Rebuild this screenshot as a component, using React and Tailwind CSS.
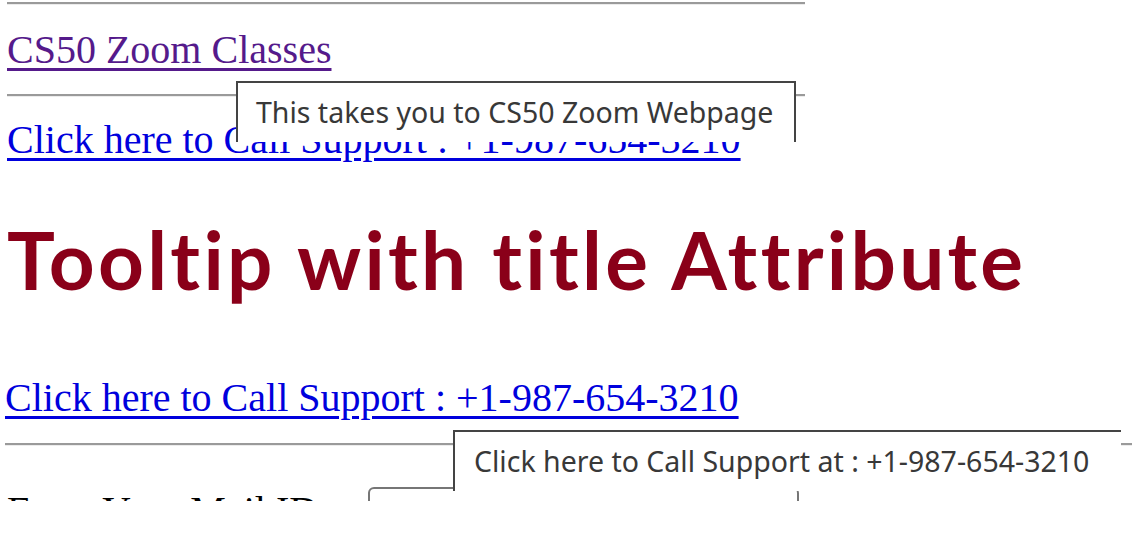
import React from 'react'

const serif = "font-['Liberation_Serif','Times_New_Roman',serif]"
const tipFont = "font-['Noto_Sans','Open_Sans',sans-serif]"

const Rule = ({ className = '' }) => (
  <hr className={`h-0 border-0 border-t-2 border-b border-t-[#9a9a9a] border-b-[#ececec] ${className}`} />
)

const Tip = ({ className, children }) => (
  <div className={`absolute bg-white overflow-hidden border-[#444] ${className}`}>
    <div className={`${tipFont} text-[28.5px] leading-[28px] text-[#383838] whitespace-nowrap`}>{children}</div>
  </div>
)

export default function App() {
  return (
    <div className="relative h-[501px] w-[1132px] overflow-hidden bg-white">
      <div className="ml-[7px] w-[798px]">
        <Rule className="mt-[2px]" />
        <a
          href="#zoom"
          title="This takes you to CS50 Zoom Webpage"
          className={`${serif} mt-[22px] block w-max text-[40px] leading-[46px] text-[#551a8b] underline decoration-[3px] underline-offset-[5px]`}
        >
          CS50 Zoom Classes
        </a>
        <Rule className="mt-[21px]" />
        <a
          href="#call"
          className={`${serif} mt-[20px] block w-max text-[40px] leading-[46px] text-[#0000dd] underline decoration-[3px] underline-offset-[5px]`}
        >
          Click here to Call Support : +1-987-654-3210
        </a>
      </div>

      <h1 className="ml-[7px] mt-[56px] font-['Lato','Open_Sans',sans-serif] text-[80px] font-bold leading-[80px] tracking-[3.3px] [font-variant-ligatures:none] text-[#8a0019] whitespace-nowrap">
        Tooltip with title Attribute
      </h1>

      <a
        href="#call"
        title="Click here to Call Support at : +1-987-654-3210"
        className={`${serif} ml-[5px] mt-[76px] block w-max text-[40px] leading-[46px] text-[#0000dd] underline decoration-[3px] underline-offset-[5px]`}
      >
        Click here to Call Support : +1-987-654-3210
      </a>
      <Rule className="ml-[5px] mt-[22px]" />

      <div className="mt-[42px] flex items-start">
        <label className={`${serif} ml-[7px] w-[361px] shrink-0 text-[40px] leading-[46px] text-black`}>
          Enter Your Mail ID:
        </label>
        <div className="-mt-[1px] h-[44px] w-[431px] rounded-md border-2 border-[#767676]" />
      </div>

      <Tip className="left-[236px] top-[81px] h-[61px] w-[560px] border-2 border-b-0 pl-[18px] pt-[15px]">
        This takes you to CS50 Zoom Webpage
      </Tip>
      <Tip className="left-[453px] top-[430px] h-[61px] w-[668px] border-t-2 border-l-2 pl-[19px] pt-[15px]">
        Click here to Call Support at : +1-987-654-3210
      </Tip>
    </div>
  )
}
